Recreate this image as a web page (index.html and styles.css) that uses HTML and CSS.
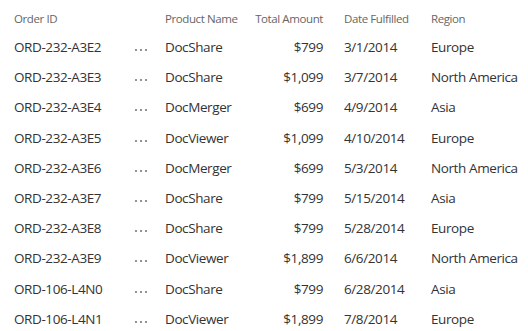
FILE: index.html
```html
<!DOCTYPE html>
<html>
<head>
<meta charset="utf-8">
<link rel="stylesheet" href="styles.css">
</head>
<body>
<div class="list">
  <div class="row head">
    <div class="c id">Order ID</div>
    <div class="c more"></div>
    <div class="c prod">Product Name</div>
    <div class="c amt">Total Amount</div>
    <div class="c date">Date Fulfilled</div>
    <div class="c reg">Region</div>
  </div>
  <div class="row"><div class="c id">ORD-232-A3E2</div><div class="c more"><svg width="14" height="4" viewBox="0 0 14 4"><circle cx="2" cy="2" r="1.1"/><circle cx="7" cy="2" r="1.1"/><circle cx="12" cy="2" r="1.1"/></svg></div><div class="c prod">DocShare</div><div class="c amt">$799</div><div class="c date">3/1/2014</div><div class="c reg">Europe</div></div>
  <div class="row"><div class="c id">ORD-232-A3E3</div><div class="c more"><svg width="14" height="4" viewBox="0 0 14 4"><circle cx="2" cy="2" r="1.1"/><circle cx="7" cy="2" r="1.1"/><circle cx="12" cy="2" r="1.1"/></svg></div><div class="c prod">DocShare</div><div class="c amt">$1,099</div><div class="c date">3/7/2014</div><div class="c reg">North America</div></div>
  <div class="row"><div class="c id">ORD-232-A3E4</div><div class="c more"><svg width="14" height="4" viewBox="0 0 14 4"><circle cx="2" cy="2" r="1.1"/><circle cx="7" cy="2" r="1.1"/><circle cx="12" cy="2" r="1.1"/></svg></div><div class="c prod">DocMerger</div><div class="c amt">$699</div><div class="c date">4/9/2014</div><div class="c reg">Asia</div></div>
  <div class="row"><div class="c id">ORD-232-A3E5</div><div class="c more"><svg width="14" height="4" viewBox="0 0 14 4"><circle cx="2" cy="2" r="1.1"/><circle cx="7" cy="2" r="1.1"/><circle cx="12" cy="2" r="1.1"/></svg></div><div class="c prod">DocViewer</div><div class="c amt">$1,099</div><div class="c date">4/10/2014</div><div class="c reg">Europe</div></div>
  <div class="row"><div class="c id">ORD-232-A3E6</div><div class="c more"><svg width="14" height="4" viewBox="0 0 14 4"><circle cx="2" cy="2" r="1.1"/><circle cx="7" cy="2" r="1.1"/><circle cx="12" cy="2" r="1.1"/></svg></div><div class="c prod">DocMerger</div><div class="c amt">$699</div><div class="c date">5/3/2014</div><div class="c reg">North America</div></div>
  <div class="row"><div class="c id">ORD-232-A3E7</div><div class="c more"><svg width="14" height="4" viewBox="0 0 14 4"><circle cx="2" cy="2" r="1.1"/><circle cx="7" cy="2" r="1.1"/><circle cx="12" cy="2" r="1.1"/></svg></div><div class="c prod">DocShare</div><div class="c amt">$799</div><div class="c date">5/15/2014</div><div class="c reg">Asia</div></div>
  <div class="row"><div class="c id">ORD-232-A3E8</div><div class="c more"><svg width="14" height="4" viewBox="0 0 14 4"><circle cx="2" cy="2" r="1.1"/><circle cx="7" cy="2" r="1.1"/><circle cx="12" cy="2" r="1.1"/></svg></div><div class="c prod">DocShare</div><div class="c amt">$799</div><div class="c date">5/28/2014</div><div class="c reg">Europe</div></div>
  <div class="row"><div class="c id">ORD-232-A3E9</div><div class="c more"><svg width="14" height="4" viewBox="0 0 14 4"><circle cx="2" cy="2" r="1.1"/><circle cx="7" cy="2" r="1.1"/><circle cx="12" cy="2" r="1.1"/></svg></div><div class="c prod">DocViewer</div><div class="c amt">$1,899</div><div class="c date">6/6/2014</div><div class="c reg">North America</div></div>
  <div class="row"><div class="c id">ORD-106-L4N0</div><div class="c more"><svg width="14" height="4" viewBox="0 0 14 4"><circle cx="2" cy="2" r="1.1"/><circle cx="7" cy="2" r="1.1"/><circle cx="12" cy="2" r="1.1"/></svg></div><div class="c prod">DocShare</div><div class="c amt">$799</div><div class="c date">6/28/2014</div><div class="c reg">Asia</div></div>
  <div class="row"><div class="c id">ORD-106-L4N1</div><div class="c more"><svg width="14" height="4" viewBox="0 0 14 4"><circle cx="2" cy="2" r="1.1"/><circle cx="7" cy="2" r="1.1"/><circle cx="12" cy="2" r="1.1"/></svg></div><div class="c prod">DocViewer</div><div class="c amt">$1,899</div><div class="c date">7/8/2014</div><div class="c reg">Europe</div></div>
</div>
</body>
</html>
```
FILE: styles.css
```css
html, body {
  margin: 0;
  background: #ffffff;
}
body {
  font-family: "Open Sans", "Noto Sans", sans-serif;
  color: #333333;
  width: 528px;
  height: 331px;
  overflow: hidden;
}
.list {
  padding-left: 14px;
}
.row {
  display: grid;
  grid-template-columns: 113px 28px 90px 78px 108px 1fr;
  align-items: center;
  height: 30.2px;
  font-size: 13.5px;
  letter-spacing: -0.4px;
  white-space: nowrap;
}
.row.head {
  height: 32px;
  align-items: end;
  font-size: 11.5px;
  letter-spacing: -0.4px;
  color: #666666;
}
.row.head .c {
  line-height: 26px;
}
.c {
  line-height: 20px;
}
.more {
  display: flex;
  justify-content: center;
  align-items: center;
  padding-top: 6px;
}
.more svg {
  fill: #7a7a7a;
  display: block;
}
.prod {
  padding-left: 10px;
}
.amt {
  text-align: right;
}
.date {
  padding-left: 21px;
}
```
